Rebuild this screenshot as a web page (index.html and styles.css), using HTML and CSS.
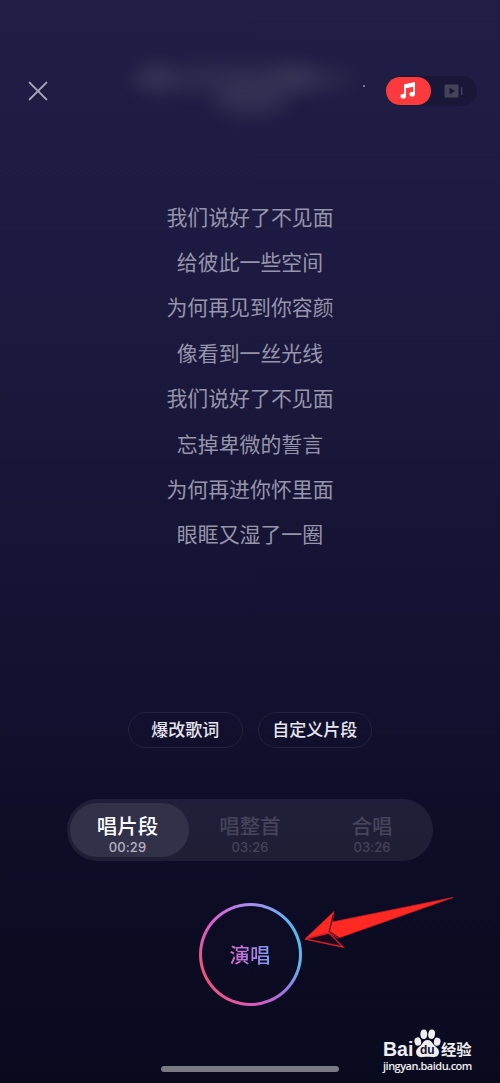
FILE: index.html
```html
<!DOCTYPE html>
<html lang="zh-CN">
<head>
<meta charset="utf-8">
<title>演唱</title>
<link rel="stylesheet" href="styles.css">
</head>
<body>
<main class="screen">
  <header class="topbar">
    <svg class="close" viewBox="0 0 20 20"><path d="M1.6 1.6 18.4 18.4M18.4 1.6 1.6 18.4"/></svg>
    <div class="song"><i class="haze haze-title"></i><i class="haze haze-left"></i><i class="haze haze-right"></i><i class="haze haze-artist"></i></div>
    <i class="dot"></i>
    <div class="mode">
      <span class="mode-item active">
        <svg class="note" viewBox="0 0 16 18"><path d="M5 14V3.2L14 1.2V12.5" fill="none" stroke="#fff" stroke-width="1.8"/><path d="M4.1 2.6 14.9.8V4.4L4.1 6.4z"/><ellipse cx="3.3" cy="14.2" rx="2.7" ry="2.4"/><ellipse cx="12.2" cy="12.2" rx="2.7" ry="2.4"/></svg>
      </span>
      <span class="mode-item">
        <svg class="video" viewBox="0 0 20 14"><path fill-rule="evenodd" d="M1.5.5h12q1 0 1 1v11q0 1-1 1h-12q-1 0-1-1v-11q0-1 1-1zM5.5 3.6v6.8l5.4-3.4zM17 3h1.3v8H17z"/></svg>
      </span>
    </div>
  </header>
  <section class="lyrics">
    <p>我们说好了不见面</p>
    <p>给彼此一些空间</p>
    <p>为何再见到你容颜</p>
    <p>像看到一丝光线</p>
    <p>我们说好了不见面</p>
    <p>忘掉卑微的誓言</p>
    <p>为何再进你怀里面</p>
    <p>眼眶又湿了一圈</p>
  </section>
  <div class="actions">
    <button class="pill">爆改歌词</button>
    <button class="pill">自定义片段</button>
  </div>
  <nav class="tabs">
    <div class="tab selected"><b>唱片段</b><span>00:29</span></div>
    <div class="tab"><b>唱整首</b><span>03:26</span></div>
    <div class="tab"><b>合唱</b><span>03:26</span></div>
  </nav>
  <button class="sing"><span>演唱</span></button>
  <div class="home"></div>

  <svg class="arrow" viewBox="0 0 160 60">
    <path class="arrow-body" d="M5 44 34 16.5 32.3 27 153 2.5 38 43.2 29 38z"/>
    <path class="arrow-fold" d="M5 44 29 38 43 52z"/>
    <path class="arrow-crease" d="M33.2 20 29.2 36.5 39 43"/>
  </svg>
  <div class="watermark">
    <div class="brand">
      <span class="bai">Bai</span>
      <span class="paw">
        <svg viewBox="0 0 27 29"><ellipse cx="3.8" cy="12.5" rx="3.3" ry="4.2" transform="rotate(-12 3.8 12.5)"/><ellipse cx="9.8" cy="5.2" rx="3.4" ry="4.7"/><ellipse cx="17.6" cy="5.2" rx="3.4" ry="4.7" transform="rotate(8 17.6 5.2)"/><ellipse cx="23.2" cy="12.7" rx="3.3" ry="4.1" transform="rotate(10 23.2 12.7)"/><path d="M13.5 11c3 0 4.2 2.1 6 4.4 2.2 2.6 5.8 4.2 5.5 8.2-.3 3.8-3.7 4.9-6.7 4.5-3.2-.5-6.2-.5-9.4 0-3.2.5-6.6-.8-6.8-4.5-.2-4 3.4-5.6 5.5-8.2 1.7-2.3 3-4.4 5.9-4.4z"/></svg>
        <em>du</em>
      </span>
      <span class="jy">经验</span>
    </div>
    <div class="url">jingyan.baidu.com</div>
  </div>
</main>
</body>
</html>
```
FILE: styles.css
```css
* { box-sizing: border-box; }
body { margin: 0; }
p { margin: 0; }
button { padding: 0; background: none; font: inherit; }

.screen {
  position: relative;
  display: flex;
  flex-direction: column;
  align-items: center;
  width: 500px;
  height: 1083px;
  overflow: hidden;
  background: linear-gradient(#201e44 0%, #1c1a40 25%, #171536 48%, #100f2c 70%, #0b0b22 88%, #0a0a1f 100%);
  font-family: "Liberation Sans", "Noto Sans CJK SC", sans-serif;
}

.topbar {
  display: flex;
  align-items: flex-start;
  width: 100%;
  height: 140px;
  padding: 59px 23px 0 28px;
}
.close { width: 20px; height: 20px; margin-top: 22px; fill: none; stroke: #a7a5b8; stroke-width: 2; stroke-linecap: round; }
.song { position: relative; width: 230px; height: 70px; margin-left: 78px; }
.haze { position: absolute; border-radius: 50%; background: #4a4868; filter: blur(10px); }
.haze-title { left: 8px; top: 6px; width: 220px; height: 28px; opacity: .34; }
.haze-left { left: 8px; top: 7px; width: 40px; height: 24px; opacity: .4; }
.haze-right { left: 144px; top: 8px; width: 46px; height: 22px; opacity: .4; }
.haze-artist { left: 88px; top: 24px; width: 74px; height: 32px; opacity: .42; }
.dot { width: 2px; height: 2px; margin: 26px 0 0 7px; border-radius: 1px; background: #9a98ae; }
.mode {
  display: flex;
  width: 91px;
  height: 30px;
  margin: 17px 0 0 auto;
  border-radius: 15px;
  background: #191738;
}
.mode-item { display: flex; align-items: center; justify-content: center; width: 46px; height: 30px; flex: none; border-radius: 15px; }
.mode-item.active { height: 28px; margin-top: 1px; background: #fb3a3d; width: 45px; }
.note { width: 16px; height: 18px; margin-right: 2px; fill: #fff; }
.video { width: 20px; height: 14px; fill: #444259; }

.lyrics {
  display: flex;
  flex-direction: column;
  margin-top: 54.6px;
  color: #9795aa;
  font-size: 20.9px;
  line-height: 45.4px;
  text-align: center;
}

.actions { display: flex; gap: 15px; margin-top: 154.4px; }
.pill {
  width: 114.5px;
  height: 36px;
  border: 1px solid #24233e;
  border-radius: 18px;
  color: #e7e6ee;
  font-size: 17px;
  font-weight: 500;
  line-height: 34px;
  padding-top: 1px;
}

.tabs {
  display: flex;
  width: 366px;
  height: 62px;
  margin-top: 51px;
  padding: 4px 0;
  border-radius: 31px;
  background: linear-gradient(#201f3b, #1e1e34);
}
.tab {
  display: flex;
  flex: none;
  flex-direction: column;
  align-items: center;
  width: 122px;
  height: 54px;
  padding-top: 10px;
  border-radius: 27px;
  color: #45445a;
}
.tab b { font-size: 20.5px; font-weight: 500; line-height: 28px; }
.tab span { margin-top: -1px; font: 500 13px/14px Inter, sans-serif; letter-spacing: .1px; }
.tab.selected { width: 119px; margin-left: 3px; padding-right: 4px; background: #32314a; color: #fff; }
.tab.selected span { color: #b4b3c1; }

.sing {
  display: flex;
  align-items: center;
  justify-content: center;
  width: 103px;
  height: 103px;
  margin-top: 42px;
  border: 3px solid transparent;
  border-radius: 50%;
  background:
    linear-gradient(#0c0c25, #0b0b22) padding-box,
    conic-gradient(#a78ff0, #55b9ee 60deg, #5dbbed 100deg, #9a78e2 135deg, #d35dc0 170deg, #e95591 210deg, #eb5773 245deg, #dc5ba9 285deg, #d862d4 315deg, #a78ff0) border-box;
}
.sing span {
  margin-top: 2px;
  background: linear-gradient(90deg, #da68cf, #a880e8 60%, #78a5ee);
  background-clip: text;
  color: transparent;
  font-size: 20.5px;
  font-weight: 500;
  line-height: 30px;
}
.home { width: 178px; height: 6px; margin-top: 60px; border-radius: 3px; background: #7a7984; }

.arrow { position: absolute; left: 300px; top: 895px; width: 160px; height: 60px; }
.arrow-body { fill: #ff2924; stroke: #d51d27; stroke-width: .8; }
.arrow-fold { fill: #180a1c; stroke: #d51d27; stroke-width: 1.4; }
.arrow-crease { fill: none; stroke: #50101e; stroke-width: 1.2; }

.watermark { position: absolute; left: 383px; top: 1029px; width: 92px; color: #eeeef1; }
.brand { display: flex; height: 29px; }
.bai { width: 31px; padding-top: 4px; font: bold 19.5px/32px "Liberation Sans", sans-serif; }
.paw { position: relative; width: 27px; height: 29px; fill: #eeeef1; }
.paw svg { display: block; width: 27px; height: 29px; }
.paw em { position: absolute; left: 6px; top: 14px; color: #11102a; font: normal bold 12px/14px "Liberation Sans", sans-serif; }
.jy { padding-top: 10px; font-size: 15.3px; font-weight: 700; line-height: 22px; white-space: nowrap; }
.url { padding-top: 1px; font: 600 11px/14px "Open Sans", sans-serif; letter-spacing: -.5px; white-space: nowrap; }
```
